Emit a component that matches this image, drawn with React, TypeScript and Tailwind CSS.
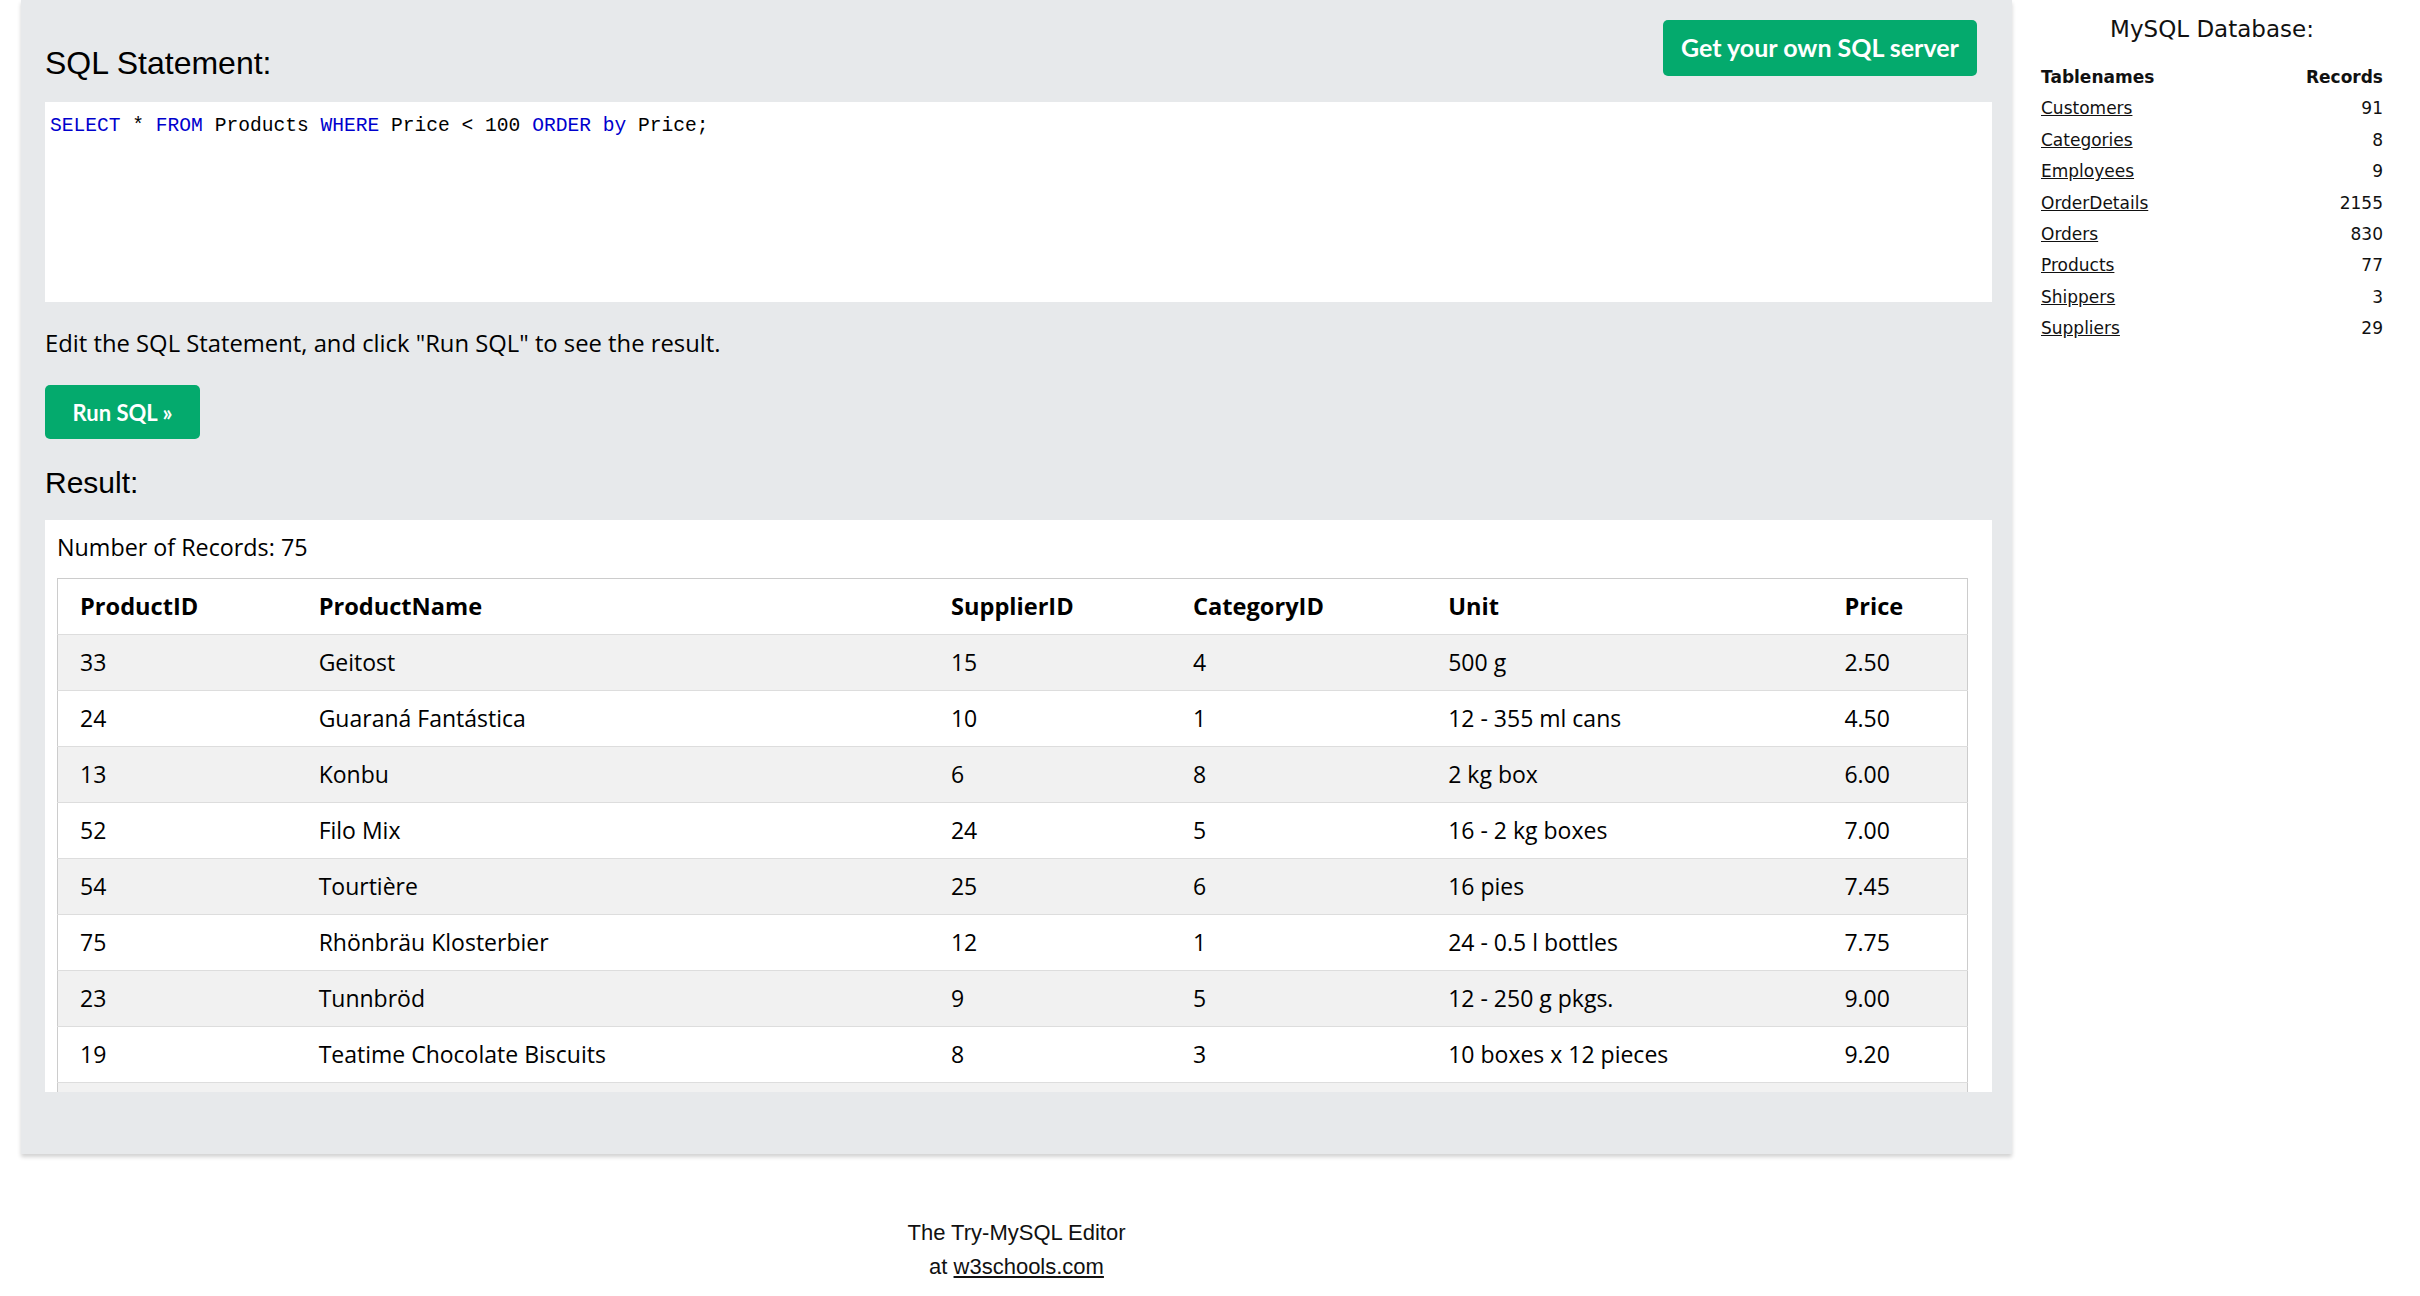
import React from 'react';

const rows = [
  { id: 33, name: 'Geitost', supplier: 15, category: 4, unit: '500 g', price: '2.50' },
  { id: 24, name: 'Guaraná Fantástica', supplier: 10, category: 1, unit: '12 - 355 ml cans', price: '4.50' },
  { id: 13, name: 'Konbu', supplier: 6, category: 8, unit: '2 kg box', price: '6.00' },
  { id: 52, name: 'Filo Mix', supplier: 24, category: 5, unit: '16 - 2 kg boxes', price: '7.00' },
  { id: 54, name: 'Tourtière', supplier: 25, category: 6, unit: '16 pies', price: '7.45' },
  { id: 75, name: 'Rhönbräu Klosterbier', supplier: 12, category: 1, unit: '24 - 0.5 l bottles', price: '7.75' },
  { id: 23, name: 'Tunnbröd', supplier: 9, category: 5, unit: '12 - 250 g pkgs.', price: '9.00' },
  { id: 19, name: 'Teatime Chocolate Biscuits', supplier: 8, category: 3, unit: '10 boxes x 12 pieces', price: '9.20' },
];

const tables = [
  ['Customers', 91],
  ['Categories', 8],
  ['Employees', 9],
  ['OrderDetails', 2155],
  ['Orders', 830],
  ['Products', 77],
  ['Shippers', 3],
  ['Suppliers', 29],
];

const App: React.FC = () => {
  return (
    <div className="bg-white min-h-screen flex text-black font-['Liberation_Sans',Arial,sans-serif]">
      {/* Editor column */}
      <div className="w-[1991px] ml-[21px] shrink-0">
        <div className="bg-[#e7e9eb] shadow-[0_3px_4px_rgba(0,0,0,0.18)] pt-5 pl-6 pr-5 pb-[62px]">
          <div className="flex justify-between h-[82px]">
            <h2 className="mt-[23px] text-[32px] leading-[40px] font-normal">SQL Statement:</h2>
            <button className="h-[56px] w-[314px] mr-[15px] rounded-[5px] bg-[#04aa6d] text-white font-['Lato',sans-serif] font-bold text-[25px]">
              Get your own SQL server
            </button>
          </div>

          <div className="h-[200px] bg-white pl-[5px] pt-3 font-['Liberation_Mono',monospace] text-[19.6px] leading-[24px] whitespace-pre">
            <span className="text-[#0000cd]">SELECT</span> * <span className="text-[#0000cd]">FROM</span> Products{' '}
            <span className="text-[#0000cd]">WHERE</span> Price &lt; 100 <span className="text-[#0000cd]">ORDER</span>{' '}
            <span className="text-[#0000cd]">by</span> Price;
          </div>

          <p className="mt-[26px] font-['Open_Sans',sans-serif] text-[23.8px] leading-[30px]">
            Edit the SQL Statement, and click "Run SQL" to see the result.
          </p>

          <button className="mt-[27px] h-[54px] w-[155px] rounded-[5px] bg-[#04aa6d] text-white font-['Lato',sans-serif] font-bold text-[22px]">
            Run SQL »
          </button>

          <h2 className="mt-[26px] text-[30px] leading-[36px] font-normal">Result:</h2>

          <div className="mt-[19px] h-[572px] overflow-hidden bg-white pl-3 pr-6 pt-[12px] font-['Open_Sans',sans-serif]">
            <div className="text-[23.3px] leading-[30px] mb-4">Number of Records: 75</div>
            <table className="table-fixed border-collapse border border-[#cccccc] w-[1911px] text-[23px]">
              <colgroup>
                <col className="w-[239px]" />
                <col className="w-[632px]" />
                <col className="w-[242px]" />
                <col className="w-[255px]" />
                <col className="w-[396px]" />
                <col className="w-[145px]" />
              </colgroup>
              <thead>
                <tr className="h-[56px] border-b border-[#dddddd] bg-white text-left text-[23.6px]">
                  <th className="pl-[22px] font-bold">ProductID</th>
                  <th className="pl-[22px] font-bold">ProductName</th>
                  <th className="pl-[22px] font-bold">SupplierID</th>
                  <th className="pl-[22px] font-bold">CategoryID</th>
                  <th className="pl-[22px] font-bold">Unit</th>
                  <th className="pl-[22px] font-bold">Price</th>
                </tr>
              </thead>
              <tbody>
                {rows.map((r, i) => (
                  <tr
                    key={r.id}
                    className={`h-[56px] border-b border-[#dddddd] ${i % 2 === 0 ? 'bg-[#f1f1f1]' : 'bg-white'}`}
                  >
                    <td className="pl-[22px]">{r.id}</td>
                    <td className="pl-[22px]">{r.name}</td>
                    <td className="pl-[22px]">{r.supplier}</td>
                    <td className="pl-[22px]">{r.category}</td>
                    <td className="pl-[22px]">{r.unit}</td>
                    <td className="pl-[22px]">{r.price}</td>
                  </tr>
                ))}
                {/* next row, scrolled out of view */}
                <tr className="h-[56px] bg-[#f1f1f1]">
                  <td colSpan={6} />
                </tr>
              </tbody>
            </table>
          </div>
        </div>

        {/* Footer */}
        <div className="mt-[62px] text-center text-[22px] leading-[34px] text-[#111]">
          <div>The Try-MySQL Editor</div>
          <div>
            at <a className="underline" href="#">w3schools.com</a>
          </div>
        </div>
      </div>

      {/* Database sidebar */}
      <div className="flex-1 pl-[29px] pr-[37px] pt-[15px] font-['DejaVu_Sans',Verdana,sans-serif] text-[#111]">
        <div className="text-center text-[23px] leading-[28px]">MySQL Database:</div>
        <table className="w-full mt-[19px] text-[17px]">
          <thead>
            <tr className="h-[31.4px]">
              <th className="text-left font-bold">Tablenames</th>
              <th className="text-right font-bold">Records</th>
            </tr>
          </thead>
          <tbody>
            {tables.map(([name, count]) => (
              <tr key={name} className="h-[31.4px]">
                <td>
                  <a className="underline" href="#">
                    {name}
                  </a>
                </td>
                <td className="text-right">{count}</td>
              </tr>
            ))}
          </tbody>
        </table>
      </div>
    </div>
  );
};

export default App;
